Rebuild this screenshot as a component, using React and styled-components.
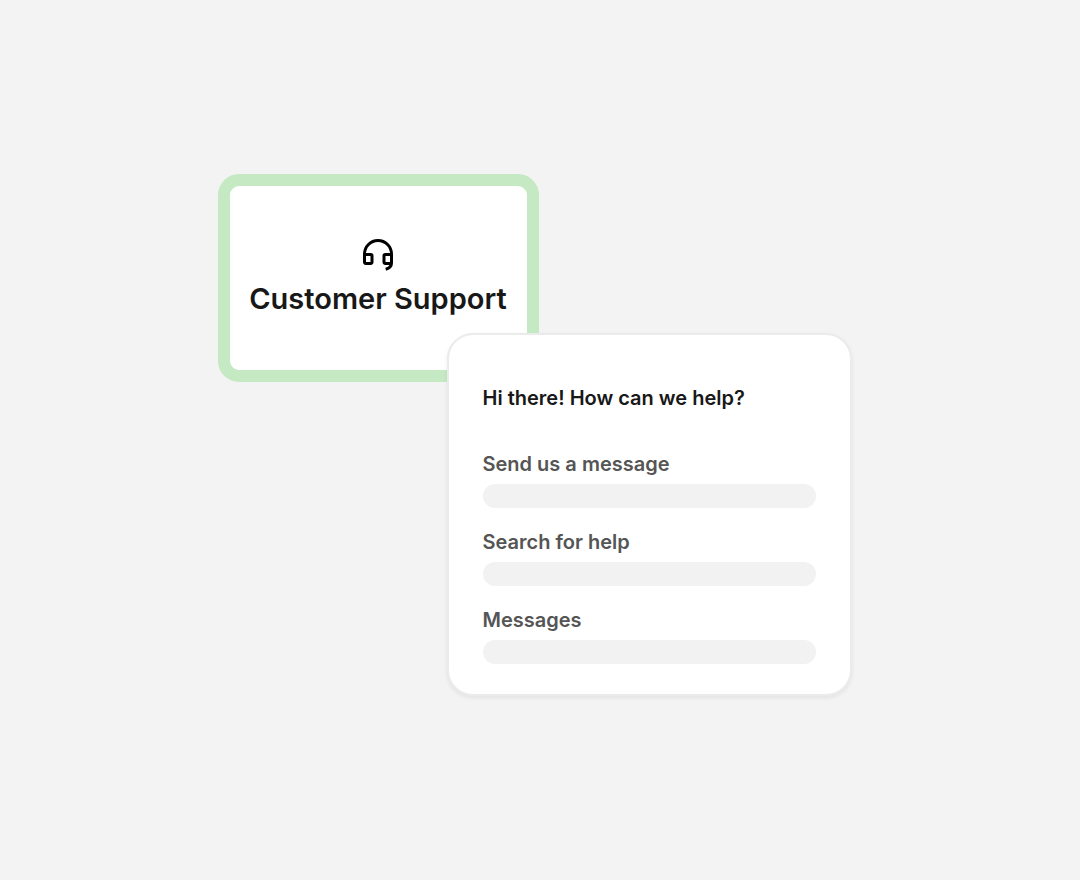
import React from "react";
import styled, { createGlobalStyle } from "styled-components";

const GlobalStyle = createGlobalStyle`
  *, *::before, *::after { box-sizing: border-box; }
  body {
    margin: 0;
    background: #ffffff;
    color: #181818;
    font-family: "Inter", "Liberation Sans", sans-serif;
  }
`;

const Page = styled.main`
  min-height: calc(100vh - 1px);
  display: flex;
  align-items: center;
  justify-content: center;
  padding: 0 11px 10px 0;
  background: #f3f3f3;
`;

const Stage = styled.div`
  width: 100%;
  max-width: 634px;
  display: flex;
  flex-direction: column;
`;

const TopicCard = styled.section`
  align-self: flex-start;
  width: 321px;
  max-width: 100%;
  min-height: 208px;
  display: flex;
  flex-direction: column;
  align-items: center;
  justify-content: center;
  gap: 9px;
  padding-bottom: 3px;
  border: 12px solid #c5e9c3;
  border-radius: 21px;
  background: #ffffff;
`;

const TopicIcon = styled.svg`
  width: 36px;
  height: 36px;
  flex: none;
`;

const TopicTitle = styled.h1`
  margin: 0;
  font-size: 29px;
  font-weight: 600;
  line-height: 36px;
  white-space: nowrap;
`;

const HelpPanel = styled.section`
  position: relative;
  align-self: flex-end;
  width: 405px;
  max-width: 100%;
  margin-top: -49px;
  padding: 49px 34px 30px;
  border: 2px solid #ebebeb;
  border-radius: 26px;
  background: #ffffff;
  box-shadow: 0 2px 4px rgba(0, 0, 0, 0.07);
`;

const PanelTitle = styled.h2`
  margin: 0 0 38px;
  font-size: 20px;
  font-weight: 600;
  line-height: 28px;
`;

const FieldList = styled.form`
  display: flex;
  flex-direction: column;
  gap: 20px;
`;

const Field = styled.label`
  display: flex;
  flex-direction: column;
  gap: 6px;
  color: #555555;
  font-size: 20px;
  font-weight: 600;
  line-height: 28px;
`;

const FieldInput = styled.input`
  width: 100%;
  height: 24px;
  padding: 0 12px;
  border: 0;
  border-radius: 12px;
  background: #f2f2f2;
  color: inherit;
  font: inherit;
  font-size: 14px;
`;

const fields = [
  { name: "message", label: "Send us a message" },
  { name: "search", label: "Search for help" },
  { name: "messages", label: "Messages" },
];

function HeadsetIcon() {
  return (
    <TopicIcon viewBox="0 0 36 36" fill="none" stroke="#000000" strokeWidth="3" aria-hidden="true">
      <path d="M4.5 20V18a13.5 13.5 0 0 1 27 0V27c0 3-2.2 5.2-5.8 6.2" />
      <path d="M4.5 18.5h6.3q1.2 0 1.2 1.2v6.4q0 1.3-1.2 1.3H5.8q-1.3 0-1.3-1.3z" />
      <path d="M31.5 18.5h-6.3q-1.2 0-1.2 1.2v6.4q0 1.3 1.2 1.3h6.3" />
    </TopicIcon>
  );
}

export default function App() {
  return (
    <>
      <GlobalStyle />
      <Page>
        <Stage>
          <TopicCard>
            <HeadsetIcon />
            <TopicTitle>Customer Support</TopicTitle>
          </TopicCard>
          <HelpPanel>
            <PanelTitle>Hi there! How can we help?</PanelTitle>
            <FieldList>
              {fields.map(({ name, label }) => (
                <Field key={name}>
                  {label}
                  <FieldInput type="text" name={name} />
                </Field>
              ))}
            </FieldList>
          </HelpPanel>
        </Stage>
      </Page>
    </>
  );
}
